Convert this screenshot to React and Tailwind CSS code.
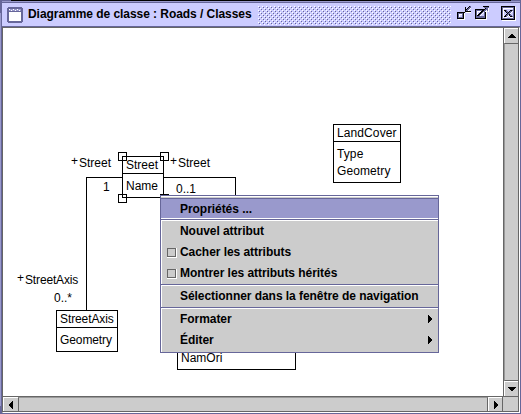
import React from "react";

const FONT = "font-['Liberation_Sans',Arial,sans-serif]";

function PixelIcon({ rows, colors, className }) {
  const w = rows[0].length;
  return (
    <svg width={w} height={rows.length} className={className} shapeRendering="crispEdges">
      {rows.flatMap((row, y) =>
        [...row].map((c, x) =>
          colors[c] ? <rect key={x + "-" + y} x={x} y={y} width="1" height="1" fill={colors[c]} /> : null
        )
      )}
    </svg>
  );
}

const METAL = { k: "#000000", p: "#666699", w: "#ffffff" };

const ICONIFY = [
  "............kp",
  "........k..kpp",
  "........k.kppw",
  "........kkppw.",
  "........kppw..",
  "........kkkkkk",
  "kkkkkkkk.wwwww",
  "kpppppkw......",
  "kpwwwpkw......",
  "kpw..pkw......",
  "kpw..pkw......",
  "kpppppkw......",
  "kkkkkkkw......",
  ".wwwwwww......",
];

const MAXIMIZE = [
  "........kkkkkk",
  ".........ppppp",
  "..........kppw",
  "kkkkkkkkkkpppw",
  "kppppppkkppwpw",
  "kpwwwwkkppww.w",
  "kpw..kkpwpkw..",
  "kpw.kkpw.pkw..",
  "kpwkkpw..pkw..",
  "kpkkpw...pkw..",
  "kpppppppppkw..",
  "kpppppppppkw..",
  "kkkkkkkkkkkw..",
  ".wwwwwwwwwww..",
];

const CLOSE = [
  "kkkkkkkkkkkkkk.",
  "kppppppppppppkw",
  "kpwwwwwwwwwwpkw",
  "kpw.........pkw",
  "kpwkkp...kkppkw",
  "kpw.kpp.kppwpkw",
  "kpw..kpkppw.pkw",
  "kpw...kppw..pkw",
  "kpw..kppkp..pkw",
  "kpw.kppwkpp.pkw",
  "kpwkkpw.wkkppkw",
  "kpw.ww...wwwpkw",
  "kppppppppppppkw",
  "kkkkkkkkkkkkkkw",
  ".wwwwwwwwwwwwww",
];

function FrameIcon() {
  return (
    <svg width="16" height="16" shapeRendering="crispEdges" className="shrink-0">
      <path d="M1 0h14v1h1v14h-1v1H1v-1H0V1h1z" fill="#666699" />
      <path d="M2 2h12v2H2z" fill="#9999cc" />
      <path d="M2 2h1v1h-1zM4 3h1v1h-1zM6 2h1v1h-1zM8 3h1v1h-1zM10 2h1v1h-1zM12 3h1v1h-1z" fill="#ffffff" />
      <path d="M2 5h12v9H2z" fill="#ffffff" />
    </svg>
  );
}

function Bumps() {
  return (
    <svg width="193" height="19" shapeRendering="crispEdges" className="shrink-0">
      <defs>
        <pattern id="bumps" width="4" height="4" patternUnits="userSpaceOnUse">
          <path d="M0 0h1v1h-1zM2 2h1v1h-1z" fill="#ffffff" />
          <path d="M1 1h1v1h-1zM3 3h1v1h-1z" fill="#666699" />
        </pattern>
      </defs>
      <rect width="193" height="19" fill="url(#bumps)" />
    </svg>
  );
}

function TitleBar() {
  return (
    <header className="flex h-[23px] shrink-0 items-start bg-[#ccccff] pl-px">
      <div className="ml-1 mt-1"><FrameIcon /></div>
      <h1 className="ml-[5px] mt-[3px] w-[230px] whitespace-nowrap text-[12px] leading-[17px] font-bold tracking-[-0.05px]">
        Diagramme de classe : Roads / Classes
      </h1>
      <div className="mt-[3px]"><Bumps /></div>
      <PixelIcon rows={ICONIFY} colors={METAL} className="ml-[6px] mt-[3px]" />
      <PixelIcon rows={MAXIMIZE} colors={METAL} className="ml-[4px] mt-[3px]" />
      <PixelIcon rows={CLOSE} colors={METAL} className="ml-[12px] mt-[3px]" />
    </header>
  );
}

function Arrow({ d, w, h }) {
  return (
    <svg width={w} height={h} shapeRendering="crispEdges">
      <path d={d} fill="#000" />
    </svg>
  );
}

const UP = "M3 0h2v1h1v1h1v1h1v1H0V3h1V2h1V1h1z";
const DOWN = "M0 0h8v1h-1v1h-1v1h-1v1H3V3H2V2H1V1H0z";
const LEFT = "M4 0v8h-1v-1h-1v-1h-1v-1H0V3h1V2h1V1h1V0z";
const RIGHT = "M0 0h1v1h1v1h1v1h1v2H3v1H2v1H1v1H0z";

function UmlClass({ name, attributes, className }) {
  return (
    <div className={`absolute border border-black bg-white text-[12px] ${className}`}>
      <div className="h-[17px] whitespace-nowrap border-b border-black pl-[3px] leading-[17px]">{name}</div>
      <div className="pl-[3px] pt-[3px]">
        {attributes.map((a) => (
          <div key={a} className="h-[17px] whitespace-nowrap leading-[18px]">{a}</div>
        ))}
      </div>
    </div>
  );
}

function Handle({ className }) {
  return <div className={`absolute size-[9px] border border-black ${className}`} />;
}

function Note({ className, children }) {
  return <span className={`absolute whitespace-nowrap text-[12px] leading-[14px] ${className}`}>{children}</span>;
}

function Diagram() {
  return (
    <main className="relative flex-1 overflow-hidden bg-white">
      <svg width="500" height="368" className="absolute inset-0" shapeRendering="crispEdges">
        <path d="M119.5 149.5H83.5V282M160.5 149.5H232.5V170" fill="none" stroke="#000" />
      </svg>
      <UmlClass name="Street" attributes={["Name"]} className="left-[119px] top-[128px] h-[42px] w-[42px]" />
      <Handle className="left-[115px] top-[124px]" />
      <Handle className="left-[157px] top-[124px]" />
      <Handle className="left-[115px] top-[166px]" />
      <Handle className="left-[157px] top-[166px]" />
      <UmlClass name="LandCover" attributes={["Type", "Geometry"]} className="left-[330px] top-[96px] h-[59px] w-[68px] tracking-[0.1px]" />
      <UmlClass name="StreetAxis" attributes={["Geometry"]} className="left-[53px] top-[282px] h-[42px] w-[62px] tracking-[-0.1px]" />
      <UmlClass name="" attributes={["NamOri"]} className="left-[174px] top-[300px] h-[42px] w-[119px]" />
      <Note className="left-[68px] top-[126px]">+</Note>
      <Note className="left-[76px] top-[128px]">Street</Note>
      <Note className="left-[167px] top-[126px]">+</Note>
      <Note className="left-[175px] top-[128px]">Street</Note>
      <Note className="left-[100px] top-[152px]">1</Note>
      <Note className="left-[173px] top-[154px]">0..1</Note>
      <Note className="left-[14px] top-[243px]">+</Note>
      <Note className="left-[22px] top-[245px] tracking-[-0.15px]">StreetAxis</Note>
      <Note className="left-[51px] top-[263px]">0..*</Note>
    </main>
  );
}

function ScrollButton({ className, children }) {
  return (
    <div className={`flex shrink-0 items-center justify-center border-l border-t border-white bg-[#cccccc] ${className}`}>
      {children}
    </div>
  );
}

function VerticalBar() {
  return (
    <div className="flex w-[16px] shrink-0 flex-col border-x border-[#666666] bg-[#cccccc]">
      <ScrollButton className="h-[15px]"><Arrow d={UP} w={8} h={4} /></ScrollButton>
      <div className="flex-1 border-y border-l border-y-[#666666] border-l-[#999999]" />
      <ScrollButton className="h-[15px]"><Arrow d={DOWN} w={8} h={4} /></ScrollButton>
    </div>
  );
}

function HorizontalBar() {
  return (
    <div className="flex h-[16px] shrink-0 border-y border-[#666666] bg-[#cccccc]">
      <ScrollButton className="w-[15px]"><Arrow d={LEFT} w={4} h={8} /></ScrollButton>
      <div className="flex-1 border-x border-t border-x-[#666666] border-t-[#999999]" />
      <ScrollButton className="w-[14px]"><Arrow d={RIGHT} w={4} h={8} /></ScrollButton>
      <div className="w-[17px] border-x border-[#666666]" />
    </div>
  );
}

function Item({ label, check, submenu, className = "" }) {
  return (
    <div className={`flex h-[21px] items-center pr-[6px] ${className}`}>
      <div className="w-[18px] shrink-0 pl-[5px]">
        {check && (
          <div className="size-[10px] border-b border-r border-white">
            <div className="size-[9px] border border-[#666666] bg-[#cccccc]" />
          </div>
        )}
      </div>
      <span className="flex-1 whitespace-nowrap text-[12px] leading-[21px] font-bold tracking-[-0.05px]">{label}</span>
      {submenu && <div className="-mt-px flex"><Arrow d={RIGHT} w={4} h={8} /></div>}
    </div>
  );
}

function Separator() {
  return <div className="h-[2px] shrink-0 border-b border-t border-b-white border-t-[#666699]" />;
}

function ContextMenu() {
  return (
    <div className="absolute left-[160px] top-[195px] flex h-[158px] w-[279px] flex-col border border-[#666699] bg-[#cccccc]">
      <div className="h-px bg-white" />
      <div className="h-px bg-[#cccccc]" />
      <div className="h-[20px] border-t border-[#666699] bg-[#9999cc] pl-px"><Item label="Propriétés ..." /></div>
      <div className="h-px bg-white" />
      <Separator />
      <div className="h-[63px] border-l border-white">
        <Item label="Nouvel attribut" />
        <Item label="Cacher les attributs" check />
        <Item label="Montrer les attributs hérités" check />
      </div>
      <Separator />
      <div className="h-[21px] border-l border-white"><Item label="Sélectionner dans la fenêtre de navigation" /></div>
      <Separator />
      <div className="flex-1 border-l border-white">
        <Item label="Formater" submenu />
        <Item label="Éditer" submenu />
      </div>
    </div>
  );
}

export default function App() {
  return (
    <div className={`relative flex h-[414px] w-[521px] flex-col overflow-hidden bg-[#666699] text-black ${FONT}`}>
      <div className="flex h-px shrink-0"><div className="ml-[11px] w-[500px] bg-black" /></div>
      <div className="flex h-[413px]">
        <div className="w-px shrink-0 pt-[12px] pb-[8px]"><div className="h-full bg-[#9999cc]" /></div>
        <div className="ml-px flex w-[518px] flex-col">
          <div className="h-px shrink-0 bg-[#9999cc]" />
          <div className="h-px shrink-0 bg-[#666699]" />
          <TitleBar />
          <div className="h-px shrink-0 bg-[#666699]" />
          <div className="flex flex-col border-b border-l border-r border-t border-b-white border-l-[#666666] border-r-white border-t-[#666666]">
            <div className="flex h-[368px]">
              <Diagram />
              <VerticalBar />
            </div>
            <HorizontalBar />
          </div>
        </div>
      </div>
      <ContextMenu />
    </div>
  );
}
